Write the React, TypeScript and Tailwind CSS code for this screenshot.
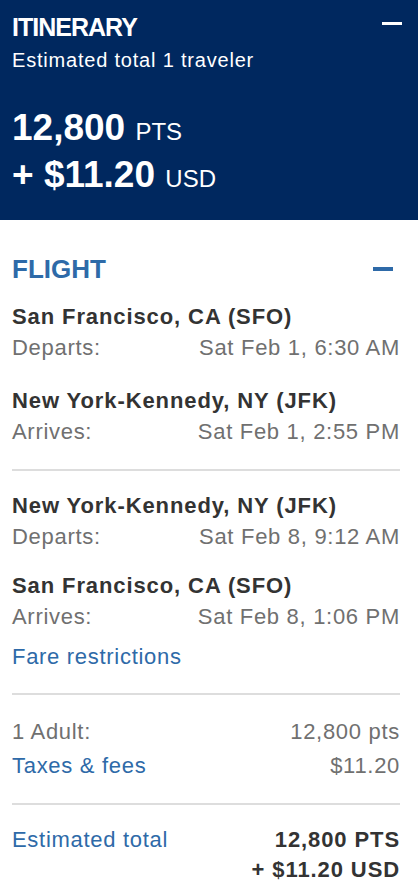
import React from "react";

const font = { fontFamily: '"Liberation Sans", Arial, Helvetica, sans-serif' };

type Leg = { city: string; label: string; time: string };

const outbound: Leg[] = [
  { city: "San Francisco, CA (SFO)", label: "Departs:", time: "Sat Feb 1, 6:30 AM" },
  { city: "New York-Kennedy, NY (JFK)", label: "Arrives:", time: "Sat Feb 1, 2:55 PM" },
];

const inbound: Leg[] = [
  { city: "New York-Kennedy, NY (JFK)", label: "Departs:", time: "Sat Feb 8, 9:12 AM" },
  { city: "San Francisco, CA (SFO)", label: "Arrives:", time: "Sat Feb 8, 1:06 PM" },
];

const LegRow = ({ leg }: { leg: Leg }) => (
  <div>
    <div className="text-[22px] leading-[31px] font-bold tracking-[0.9px] text-[#333333]">
      {leg.city}
    </div>
    <div className="flex justify-between text-[22px] leading-[31px] tracking-[0.7px] text-[#707070]">
      <span>{leg.label}</span>
      <span>{leg.time}</span>
    </div>
  </div>
);

const App: React.FC = () => {
  return (
    <div className="w-[418px] min-h-[894px] bg-white" style={font}>
      {/* Itinerary header */}
      <div className="bg-[#00285f] text-white pl-3 pr-4 pt-3 pb-[22px]">
        <div className="flex justify-between items-start">
          <h1 className="text-[25px] leading-[30px] font-bold tracking-[-1px]">ITINERARY</h1>
          <div className="mt-[10px] w-5 h-[3px] bg-white" />
        </div>
        <p className="mt-[5px] text-[20px] leading-[26px] tracking-[0.8px]">
          Estimated total 1 traveler
        </p>
        <div className="mt-[31px]">
          <div className="text-[37px] leading-[47px] font-bold">
            12,800 <span className="text-[24px] leading-none font-normal">PTS</span>
          </div>
          <div className="text-[37px] leading-[47px] font-bold">
            + $11.20 <span className="text-[24px] leading-none font-normal">USD</span>
          </div>
        </div>
      </div>

      {/* Flight details */}
      <div className="pl-3 pr-[18px] pt-[33px] pb-4">
        <div className="flex justify-between items-center">
          <h2 className="text-[26px] leading-[32px] font-bold text-[#2e6aa8]">FLIGHT</h2>
          <div className="mr-[7px] w-5 h-1 bg-[#2e6aa8]" />
        </div>

        <div className="mt-4 flex flex-col gap-[22px]">
          {outbound.map((leg) => (
            <LegRow key={leg.label + leg.time} leg={leg} />
          ))}
        </div>

        <div className="mt-[22px] h-[2px] bg-[#dddddd]" />

        <div className="mt-[19px] flex flex-col gap-[18px]">
          {inbound.map((leg) => (
            <LegRow key={leg.label + leg.time} leg={leg} />
          ))}
        </div>

        <a
          className="block mt-[9px] text-[22px] leading-[31px] tracking-[0.7px] text-[#2e6aa8]"
          href="#"
        >
          Fare restrictions
        </a>

        <div className="mt-[21px] h-[2px] bg-[#dddddd]" />

        <div className="mt-[21px] flex flex-col gap-[3px] text-[22px] leading-[31px] tracking-[0.7px]">
          <div className="flex justify-between text-[#707070]">
            <span>1 Adult:</span>
            <span>12,800 pts</span>
          </div>
          <div className="flex justify-between">
            <a className="text-[#2e6aa8]" href="#">
              Taxes &amp; fees
            </a>
            <span className="text-[#707070]">$11.20</span>
          </div>
        </div>

        <div className="mt-[22px] h-[2px] bg-[#dddddd]" />

        <div className="mt-[20px] flex justify-between text-[22px] leading-[30px]">
          <a className="text-[#2e6aa8] tracking-[0.7px]" href="#">
            Estimated total
          </a>
          <div className="text-right font-bold tracking-[0.9px] text-[#333333]">
            <div>12,800 PTS</div>
            <div>+ $11.20 USD</div>
          </div>
        </div>
      </div>
    </div>
  );
};

export default App;
